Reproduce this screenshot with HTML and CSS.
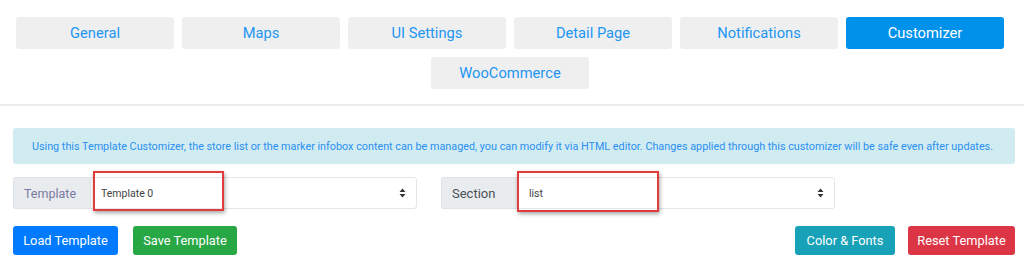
FILE: index.html
```html
<!DOCTYPE html>
<html lang="en">

<head>
    <meta charset="UTF-8">
    <meta name="viewport" content="width=device-width, initial-scale=1.0">
    <title>Template Customizer</title>
    <link rel="stylesheet" href="styles.css">
</head>

<body>

    <!-- TABS -->
    <nav class="tabs">
        <a class="tab">General</a>
        <a class="tab">Maps</a>
        <a class="tab">UI Settings</a>
        <a class="tab">Detail Page</a>
        <a class="tab">Notifications</a>
        <a class="tab active">Customizer</a>
        <a class="tab">WooCommerce</a>
    </nav>

    <hr class="divider">

    <!-- CUSTOMIZER -->
    <section class="panel">

        <div class="info">
            Using this Template Customizer, the store list or the marker infobox content can be managed, you can modify it via HTML editor. Changes applied through this customizer will be safe even after updates.
        </div>

        <div class="fields">
            <div class="group group-template">
                <span class="group-label label-muted">Template</span>
                <div class="select">
                    <span>Template 0</span>
                    <svg class="arrows" width="7" height="10" viewBox="0 0 7 10"><path d="M3.5 0.5 L6.5 4 H0.5 Z M3.5 9.5 L6.5 6 H0.5 Z" fill="#333"/></svg>
                </div>
                <span class="mark mark-template"></span>
            </div>

            <div class="group group-section">
                <span class="group-label">Section</span>
                <div class="select">
                    <span>list</span>
                    <svg class="arrows" width="7" height="10" viewBox="0 0 7 10"><path d="M3.5 0.5 L6.5 4 H0.5 Z M3.5 9.5 L6.5 6 H0.5 Z" fill="#333"/></svg>
                </div>
                <span class="mark mark-section"></span>
            </div>
        </div>

        <div class="actions">
            <div class="actions-left">
                <button class="btn btn-blue">Load Template</button>
                <button class="btn btn-green">Save Template</button>
            </div>
            <div class="actions-right">
                <button class="btn btn-teal">Color &amp; Fonts</button>
                <button class="btn btn-red">Reset Template</button>
            </div>
        </div>

    </section>

</body>

</html>
```

FILE: styles.css
```css
body {
    margin: 0;
    background: #ffffff;
    font-family: Roboto, "Liberation Sans", sans-serif;
}

.tabs {
    display: flex;
    flex-wrap: wrap;
    justify-content: center;
    gap: 8px;
    padding: 17px 16px 0 16px;
    width: 988px;
}

.tab {
    width: 158px;
    height: 32px;
    display: flex;
    align-items: center;
    justify-content: center;
    background-color: #efefef;
    color: #2196f3;
    font-size: 14.7px;
    border-radius: 3px;
}

.tab.active {
    background-color: #0091ea;
    color: #ffffff;
}

.divider {
    margin: 15px 0 0 0;
    border: 0;
    border-top: 2px solid #ececec;
}

.panel {
    padding: 0 9px 0 13px;
}

.info {
    margin-top: 22px;
    height: 36px;
    display: flex;
    align-items: center;
    justify-content: center;
    background-color: #d1ecf1;
    border-radius: 3px;
    color: #2b8ff0;
    font-size: 10.8px;
    padding: 0 3px 0 0;
}

.fields {
    display: flex;
    gap: 24px;
    margin-top: 13px;
}

.group {
    position: relative;
    display: flex;
    height: 32px;
}

.group-template {
    width: 404px;
}

.group-section {
    width: 394px;
}

.group-label {
    display: flex;
    align-items: center;
    padding: 0 0 0 10px;
    width: 66px;
    background-color: #e9ecef;
    border: 1px solid #dfe3e7;
    border-right: 0;
    border-radius: 3px 0 0 3px;
    color: #495057;
    font-size: 13px;
}

.label-muted {
    color: #7a7aa0;
    font-size: 12.5px;
}

.select {
    flex: 1;
    display: flex;
    align-items: center;
    justify-content: space-between;
    padding: 0 10px;
    border: 1px solid #e3e6ea;
    border-radius: 0 3px 3px 0;
    color: #444444;
    font-size: 10.5px;
}

/* red annotation boxes */
.mark {
    position: absolute;
    top: -6px;
    height: 40px;
    border: 2px solid #e03c3c;
    box-shadow: 1px 2px 4px rgba(0, 0, 0, 0.35);
    box-sizing: border-box;
}

.mark-template {
    left: 80px;
    width: 131px;
}

.mark-section {
    left: 76px;
    width: 142px;
    top: -6px;
    height: 41px;
}

.actions {
    display: flex;
    justify-content: space-between;
    margin-top: 17px;
}

.actions-left,
.actions-right {
    display: flex;
    gap: 15px;
}

.actions-right {
    gap: 13px;
}

.btn {
    height: 29px;
    padding: 0;
    border: 0;
    border-radius: 3px;
    color: #ffffff;
    font-family: Roboto, "Liberation Sans", sans-serif;
    font-size: 12.8px;
    white-space: nowrap;
}

.btn-blue {
    width: 105px;
    background-color: #007bff;
}

.btn-green {
    width: 104px;
    background-color: #28a745;
}

.btn-teal {
    width: 100px;
    background-color: #17a2b8;
}

.btn-red {
    width: 107px;
    background-color: #dc3545;
}
```
